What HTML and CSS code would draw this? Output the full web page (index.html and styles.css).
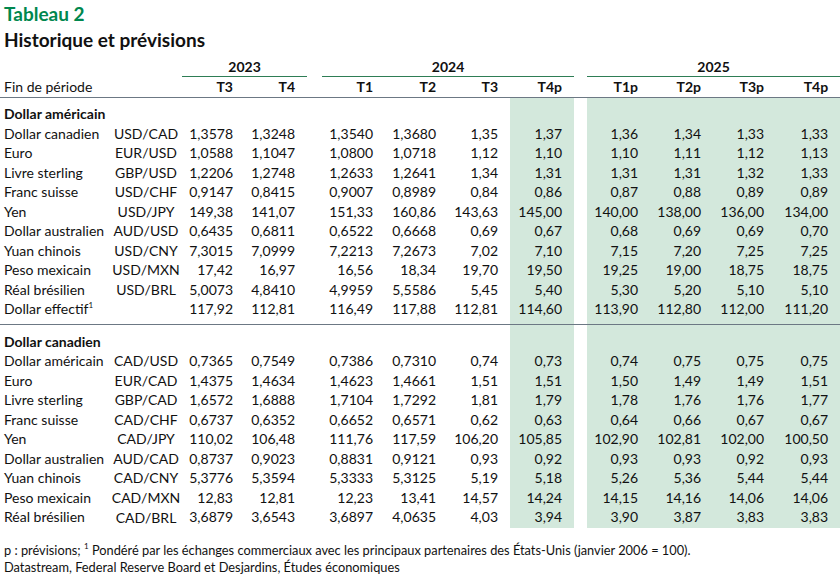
FILE: index.html
```html
<!DOCTYPE html>
<html lang="fr">
<head>
<meta charset="utf-8">
<title>Tableau 2</title>
<link rel="stylesheet" href="styles.css">
</head>
<body>
<div class="page">
  <h1 class="title">Tableau 2</h1>
  <h2 class="subtitle">Historique et prévisions</h2>
  <table class="fx">
    <colgroup>
      <col class="c-label"><col class="c-pair">
      <col class="c-n1"><col class="c-n2">
      <col class="c-gap1">
      <col class="c-n1"><col class="c-n1"><col class="c-n2"><col class="c-n3 shade">
      <col class="c-gap2">
      <col class="c-n1 shade"><col class="c-n1 shade"><col class="c-n1 shade"><col class="c-n3 shade">
    </colgroup>
    <thead>
      <tr class="years">
        <th></th><th></th>
        <th class="yr" colspan="2">2023</th>
        <th></th>
        <th class="yr" colspan="4">2024</th>
        <th></th>
        <th class="yr" colspan="4">2025</th>
      </tr>
      <tr class="heads">
        <th class="lbl">Fin de période</th><th></th>
        <th>T3</th><th>T4</th><th></th>
        <th>T1</th><th>T2</th><th>T3</th><th>T4p</th><th></th>
        <th>T1p</th><th>T2p</th><th>T3p</th><th>T4p</th>
      </tr>
    </thead>
    <tbody class="sec">
      <tr class="sec-head"><td class="lbl bold">Dollar américain</td><td></td><td></td><td></td><td></td><td></td><td></td><td></td><td></td><td></td><td></td><td></td><td></td><td></td></tr>
      <tr><td class="lbl">Dollar canadien</td><td class="pair">USD/CAD</td><td>1,3578</td><td>1,3248</td><td></td><td>1,3540</td><td>1,3680</td><td>1,35</td><td>1,37</td><td></td><td>1,36</td><td>1,34</td><td>1,33</td><td>1,33</td></tr>
      <tr><td class="lbl">Euro</td><td class="pair">EUR/USD</td><td>1,0588</td><td>1,1047</td><td></td><td>1,0800</td><td>1,0718</td><td>1,12</td><td>1,10</td><td></td><td>1,10</td><td>1,11</td><td>1,12</td><td>1,13</td></tr>
      <tr><td class="lbl">Livre sterling</td><td class="pair">GBP/USD</td><td>1,2206</td><td>1,2748</td><td></td><td>1,2633</td><td>1,2641</td><td>1,34</td><td>1,31</td><td></td><td>1,31</td><td>1,31</td><td>1,32</td><td>1,33</td></tr>
      <tr><td class="lbl">Franc suisse</td><td class="pair">USD/CHF</td><td>0,9147</td><td>0,8415</td><td></td><td>0,9007</td><td>0,8989</td><td>0,84</td><td>0,86</td><td></td><td>0,87</td><td>0,88</td><td>0,89</td><td>0,89</td></tr>
      <tr><td class="lbl">Yen</td><td class="pair">USD/JPY</td><td>149,38</td><td>141,07</td><td></td><td>151,33</td><td>160,86</td><td>143,63</td><td>145,00</td><td></td><td>140,00</td><td>138,00</td><td>136,00</td><td>134,00</td></tr>
      <tr><td class="lbl">Dollar australien</td><td class="pair">AUD/USD</td><td>0,6435</td><td>0,6811</td><td></td><td>0,6522</td><td>0,6668</td><td>0,69</td><td>0,67</td><td></td><td>0,68</td><td>0,69</td><td>0,69</td><td>0,70</td></tr>
      <tr><td class="lbl">Yuan chinois</td><td class="pair">USD/CNY</td><td>7,3015</td><td>7,0999</td><td></td><td>7,2213</td><td>7,2673</td><td>7,02</td><td>7,10</td><td></td><td>7,15</td><td>7,20</td><td>7,25</td><td>7,25</td></tr>
      <tr><td class="lbl">Peso mexicain</td><td class="pair">USD/MXN</td><td>17,42</td><td>16,97</td><td></td><td>16,56</td><td>18,34</td><td>19,70</td><td>19,50</td><td></td><td>19,25</td><td>19,00</td><td>18,75</td><td>18,75</td></tr>
      <tr><td class="lbl">Réal brésilien</td><td class="pair">USD/BRL</td><td>5,0073</td><td>4,8410</td><td></td><td>4,9959</td><td>5,5586</td><td>5,45</td><td>5,40</td><td></td><td>5,30</td><td>5,20</td><td>5,10</td><td>5,10</td></tr>
      <tr class="sec-end"><td class="lbl">Dollar effectif<sup>1</sup></td><td class="pair"></td><td>117,92</td><td>112,81</td><td></td><td>116,49</td><td>117,88</td><td>112,81</td><td>114,60</td><td></td><td>113,90</td><td>112,80</td><td>112,00</td><td>111,20</td></tr>
    </tbody>
    <tbody class="sec">
      <tr class="sec-head2"><td class="lbl bold">Dollar canadien</td><td></td><td></td><td></td><td></td><td></td><td></td><td></td><td></td><td></td><td></td><td></td><td></td><td></td></tr>
      <tr><td class="lbl">Dollar américain</td><td class="pair">CAD/USD</td><td>0,7365</td><td>0,7549</td><td></td><td>0,7386</td><td>0,7310</td><td>0,74</td><td>0,73</td><td></td><td>0,74</td><td>0,75</td><td>0,75</td><td>0,75</td></tr>
      <tr><td class="lbl">Euro</td><td class="pair">EUR/CAD</td><td>1,4375</td><td>1,4634</td><td></td><td>1,4623</td><td>1,4661</td><td>1,51</td><td>1,51</td><td></td><td>1,50</td><td>1,49</td><td>1,49</td><td>1,51</td></tr>
      <tr><td class="lbl">Livre sterling</td><td class="pair">GBP/CAD</td><td>1,6572</td><td>1,6888</td><td></td><td>1,7104</td><td>1,7292</td><td>1,81</td><td>1,79</td><td></td><td>1,78</td><td>1,76</td><td>1,76</td><td>1,77</td></tr>
      <tr><td class="lbl">Franc suisse</td><td class="pair">CAD/CHF</td><td>0,6737</td><td>0,6352</td><td></td><td>0,6652</td><td>0,6571</td><td>0,62</td><td>0,63</td><td></td><td>0,64</td><td>0,66</td><td>0,67</td><td>0,67</td></tr>
      <tr><td class="lbl">Yen</td><td class="pair">CAD/JPY</td><td>110,02</td><td>106,48</td><td></td><td>111,76</td><td>117,59</td><td>106,20</td><td>105,85</td><td></td><td>102,90</td><td>102,81</td><td>102,00</td><td>100,50</td></tr>
      <tr><td class="lbl">Dollar australien</td><td class="pair">AUD/CAD</td><td>0,8737</td><td>0,9023</td><td></td><td>0,8831</td><td>0,9121</td><td>0,93</td><td>0,92</td><td></td><td>0,93</td><td>0,93</td><td>0,92</td><td>0,93</td></tr>
      <tr><td class="lbl">Yuan chinois</td><td class="pair">CAD/CNY</td><td>5,3776</td><td>5,3594</td><td></td><td>5,3333</td><td>5,3125</td><td>5,19</td><td>5,18</td><td></td><td>5,26</td><td>5,36</td><td>5,44</td><td>5,44</td></tr>
      <tr><td class="lbl">Peso mexicain</td><td class="pair">CAD/MXN</td><td>12,83</td><td>12,81</td><td></td><td>12,23</td><td>13,41</td><td>14,57</td><td>14,24</td><td></td><td>14,15</td><td>14,16</td><td>14,06</td><td>14,06</td></tr>
      <tr class="sec-last"><td class="lbl">Réal brésilien</td><td class="pair">CAD/BRL</td><td>3,6879</td><td>3,6543</td><td></td><td>3,6897</td><td>4,0635</td><td>4,03</td><td>3,94</td><td></td><td>3,90</td><td>3,87</td><td>3,83</td><td>3,83</td></tr>
    </tbody>
  </table>
  <p class="note">p : prévisions; <sup>1</sup> Pondéré par les échanges commerciaux avec les principaux partenaires des États-Unis (janvier 2006 = 100).</p>
  <p class="note">Datastream, Federal Reserve Board et Desjardins, Études économiques</p>
</div>
</body>
</html>
```
FILE: styles.css
```css
html, body {
  margin: 0;
  padding: 0;
  background: #ffffff;
}

.page {
  width: 840px;
  font-family: Lato, "Liberation Sans", Arial, sans-serif;
  color: #111111;
}

.title {
  margin: 0;
  padding: 2px 0 0 4px;
  font-size: 19px;
  line-height: 24px;
  font-weight: 700;
  color: #00874e;
}

.subtitle {
  margin: 0;
  padding: 1px 0 0 4px;
  font-size: 19px;
  line-height: 26px;
  font-weight: 700;
  color: #111111;
}

.fx {
  width: 840px;
  table-layout: fixed;
  border-collapse: separate;
  border-spacing: 0;
  font-size: 14px;
  margin-top: 5px;
}

.c-label { width: 110px; }
.c-pair { width: 72px; }
.c-n1 { width: 63px; }
.c-n2 { width: 62px; }
.c-n3 { width: 64px; }
.c-gap1 { width: 15px; }
.c-gap2 { width: 13px; }
.shade { background: #d3e8dc; }

.fx th,
.fx td {
  padding: 0 12px 0 0;
  text-align: right;
  white-space: nowrap;
  line-height: 19.5px;
  vertical-align: middle;
}

.fx thead th {
  background: #ffffff;
  font-weight: 700;
}

.years th {
  line-height: 18px;
}

.years .yr {
  text-align: center;
  padding: 0;
  border-bottom: 1px solid #2e7d55;
}

.heads th {
  line-height: 20px;
  border-bottom: 1px solid #6c7884;
}

.heads .lbl {
  font-weight: 400;
}

.fx .lbl {
  text-align: left;
  padding-left: 4px;
  padding-right: 0;
}

.fx .pair {
  text-align: center;
  padding: 0;
}

.bold { font-weight: 700; }

.sec-head td { padding-top: 6px; }
.sec-end td {
  padding-bottom: 5px;
  border-bottom: 1px solid #6c7884;
}
.sec-head2 td { padding-top: 7px; }
.sec-last td { padding-bottom: 1px; }

sup {
  font-size: 8px;
  line-height: 0;
  vertical-align: 6px;
}

.note {
  margin: 0;
  padding-left: 4px;
  font-size: 12.8px;
  line-height: 17px;
}

.note:first-of-type {
  margin-top: 14px;
}
```
